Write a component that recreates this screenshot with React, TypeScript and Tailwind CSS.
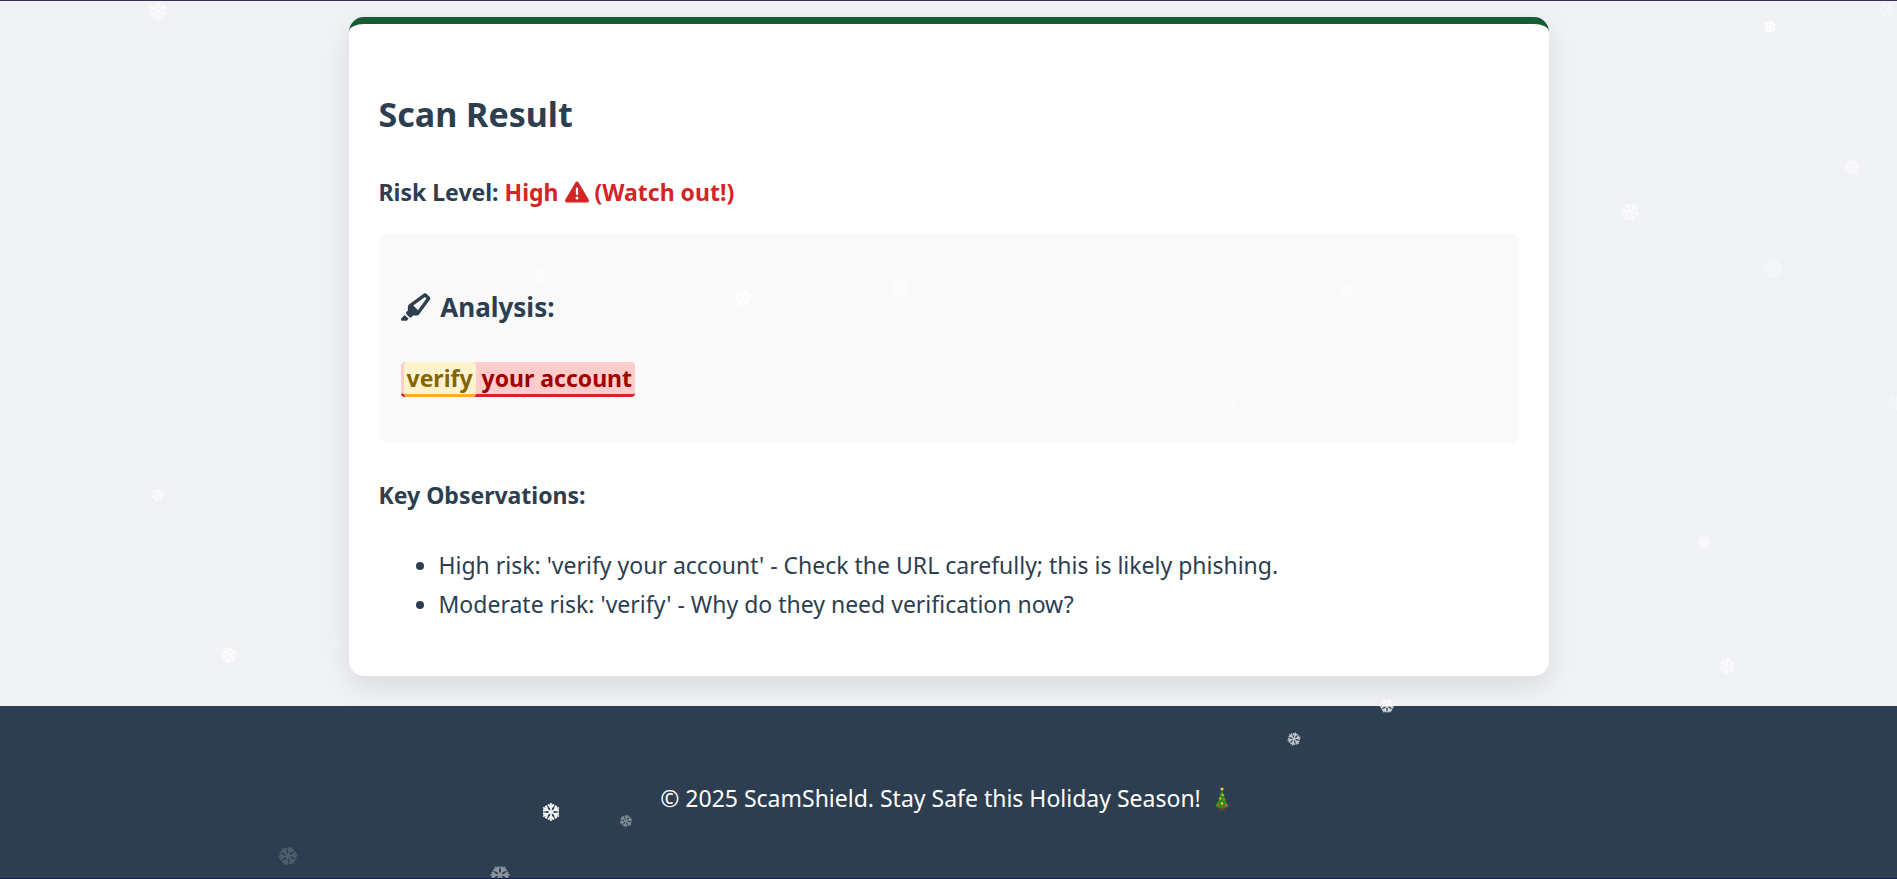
import { FaHighlighter, FaTriangleExclamation } from "react-icons/fa6";

type Flake = { x: number; y: number; size: number; opacity: number; turn: number };

// x is a share of the window's width, in percent; y is in pixels.
const flakes: Flake[] = [
  { x: 8.33, y: 10, size: 20, opacity: 0.6, turn: 0 },
  { x: 93.3, y: 26, size: 13, opacity: 0.95, turn: 10 },
  { x: 99.47, y: 9, size: 16, opacity: 0.4, turn: 30 },
  { x: 97.63, y: 166, size: 16, opacity: 0.65, turn: 20 },
  { x: 85.93, y: 211, size: 20, opacity: 0.65, turn: 40 },
  { x: 83.66, y: 214, size: 13, opacity: 0.2, turn: 0 },
  { x: 93.46, y: 268, size: 20, opacity: 0.4, turn: 30 },
  { x: 99.9, y: 402, size: 16, opacity: 0.4, turn: 30 },
  { x: 8.33, y: 494, size: 13, opacity: 0.75, turn: 15 },
  { x: 12.07, y: 654, size: 17, opacity: 0.8, turn: 10 },
  { x: 17.76, y: 641, size: 11, opacity: 0.2, turn: 0 },
  { x: 89.83, y: 541, size: 13, opacity: 0.7, turn: 0 },
  { x: 92.15, y: 571, size: 14, opacity: 0.15, turn: 0 },
  { x: 91.04, y: 665, size: 17, opacity: 0.7, turn: 10 },
  { x: 89.14, y: 693, size: 16, opacity: 0.12, turn: 0 },
  { x: 28.31, y: 275, size: 20, opacity: 0.55, turn: 0 },
  { x: 26.52, y: 293, size: 17, opacity: 0.3, turn: 20 },
  { x: 39.17, y: 297, size: 18, opacity: 1, turn: 20 },
  { x: 47.39, y: 287, size: 20, opacity: 0.5, turn: 0 },
  { x: 42.49, y: 377, size: 19, opacity: 0.4, turn: 10 },
  { x: 70.95, y: 290, size: 14, opacity: 0.8, turn: 0 },
  { x: 73.59, y: 314, size: 14, opacity: 0.3, turn: 30 },
  { x: 64.84, y: 401, size: 12, opacity: 0.5, turn: 10 },
  { x: 29.05, y: 811, size: 19, opacity: 0.95, turn: 0 },
  { x: 33, y: 820, size: 13, opacity: 0.4, turn: 10 },
  { x: 15.18, y: 855, size: 20, opacity: 0.16, turn: 22 },
  { x: 26.36, y: 874, size: 20, opacity: 0.45, turn: 30 },
  { x: 68.21, y: 738, size: 14, opacity: 0.7, turn: 15 },
  { x: 73.12, y: 705, size: 15, opacity: 0.8, turn: 30 },
];

const spokes = [0, 60, 120, 180, 240, 300];

function Snowflake({ x, y, size, opacity, turn }: Flake) {
  return (
    <svg
      viewBox="-10 -10 20 20"
      width={size}
      height={size}
      className="absolute -translate-x-1/2 -translate-y-1/2"
      style={{ left: `${x}%`, top: y, opacity }}
      fill="none"
      stroke="#ffffff"
      strokeWidth="1.8"
    >
      {spokes.map((angle) => (
        <g key={angle} transform={`rotate(${angle + turn})`}>
          <path d="M0 0V-9.6" />
          <path d="M-3 -8L0 -4.6L3 -8" strokeWidth="2.4" />
        </g>
      ))}
    </svg>
  );
}

function ChristmasTree() {
  return (
    <svg viewBox="0 0 14 24" className="mx-2 inline-block h-6 w-[14px] align-[-4px]" role="img" aria-label="Christmas tree">
      <path d="M4.6 20h4.8l.6 3.4H4z" fill="#6d4034" />
      <path
        d="M7 3.2L9.6 8.4L9 9L11 12.8L10.4 13.6L13 17.4C13.8 18.8 13.2 20.4 11.6 20.4C9.8 20.4 9.2 21.2 7 21.2S4.2 20.4 2.4 20.4C.8 20.4.2 18.8 1 17.4L3.6 13.6L3 12.8L5 9L4.4 8.4Z"
        fill="#35871f"
      />
      <circle cx="7" cy="2" r="1.6" fill="#f7c243" />
      <circle cx="7.6" cy="8" r="1" fill="#f3d13b" />
      <circle cx="5.4" cy="11.4" r="1" fill="#f3d13b" />
      <circle cx="7" cy="16.4" r="1.2" fill="#f3d13b" />
      <circle cx="9" cy="12.4" r="1.1" fill="#e0502c" />
      <circle cx="3.2" cy="17.8" r="1.2" fill="#e0502c" />
      <circle cx="11" cy="18" r="1.2" fill="#e0502c" />
    </svg>
  );
}

const observations = [
  "High risk: 'verify your account' - Check the URL carefully; this is likely phishing.",
  "Moderate risk: 'verify' - Why do they need verification now?",
];

export default function App() {
  return (
    <div className="relative flex min-h-screen flex-col overflow-hidden border-t border-b border-t-[#3f3150] border-b-[#12204f] bg-[#f0f2f6] font-['Noto_Sans','Open_Sans',sans-serif] text-[23px] leading-[39px] text-[#2c3e50]">
      <main className="mx-auto mt-4 mb-[30px] w-full max-w-[1200px] rounded-[15px] border-t-[7px] border-[#165b33] bg-white px-[30px] pt-[61px] pb-[52px] shadow-[0_10px_30px_rgba(0,0,0,0.1)]">
        <h2 className="text-[34px] leading-[58px] font-bold">Scan Result</h2>
        <p className="mt-[30px] font-bold">
          Risk Level:{" "}
          <span className="text-[#d42426]">
            High <FaTriangleExclamation className="inline-block size-6 align-[-3px]" /> (Watch out!)
          </span>
        </p>
        <section className="mt-[22px] rounded-lg bg-[#f9f9f9] px-[22px] pt-[51px] pb-[45px]">
          <h3 className="text-[26px] leading-[45px] font-bold">
            <FaHighlighter className="mr-0.5 inline-block h-7 w-[31px] align-[-4px]" /> Analysis:
          </h3>
          <p className="mt-[29px] font-bold">
            <mark className="rounded border-b-[3px] border-[#d42426] bg-[#ffcccc] px-[3px] text-[#a00000]">
              <mark className="rounded border-b-[3px] border-[#f8b229] bg-[#fff3cd] px-[3px] text-[#856404]">verify</mark>{" "}
              your account
            </mark>
          </p>
        </section>
        <p className="mt-[33px] font-bold">Key Observations:</p>
        <ul className="mt-[31px] list-disc pl-[60px]">
          {observations.map((text) => (
            <li key={text}>{text}</li>
          ))}
        </ul>
      </main>
      <footer className="grow bg-[#2c3e50] px-6 pt-[73px] pb-[60px] text-center text-white">
        <p>
          © 2025 ScamShield. Stay Safe this Holiday Season! <ChristmasTree />
        </p>
      </footer>
      <div className="pointer-events-none absolute inset-0 overflow-hidden" aria-hidden="true">
        {flakes.map((flake) => (
          <Snowflake key={`${flake.x}-${flake.y}`} {...flake} />
        ))}
      </div>
    </div>
  );
}
